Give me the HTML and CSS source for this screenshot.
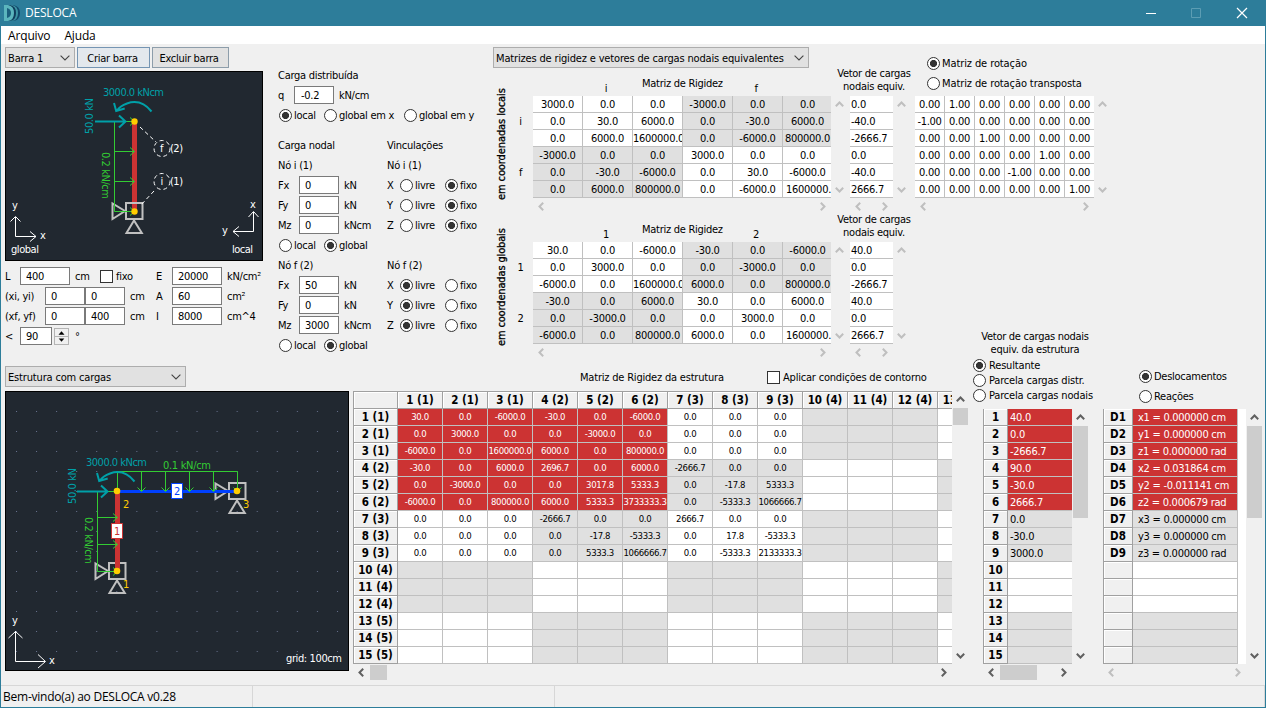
FILE: index.html
```html
<!DOCTYPE html>
<html lang="pt-BR">
<head>
<meta charset="utf-8">
<title>DESLOCA</title>
<link rel="stylesheet" href="styles.css">
</head>
<body>
<svg class="defs" width="0" height="0">
  <symbol id="up" viewBox="0 0 9 6"><path d="M0.8 5.2 4.5 1.5 8.2 5.2" fill="none" stroke="currentColor" stroke-width="2"/></symbol>
  <symbol id="down" viewBox="0 0 9 6"><path d="M0.8 .8 4.5 4.5 8.2 .8" fill="none" stroke="currentColor" stroke-width="2"/></symbol>
  <symbol id="left" viewBox="0 0 6 9"><path d="M5.2 .8 1.5 4.5 5.2 8.2" fill="none" stroke="currentColor" stroke-width="2"/></symbol>
  <symbol id="right" viewBox="0 0 6 9"><path d="M.8 .8 4.5 4.5 .8 8.2" fill="none" stroke="currentColor" stroke-width="2"/></symbol>
  <symbol id="caret" viewBox="0 0 10 6"><path d="M.6 .6 5 5 9.4 .6" fill="none" stroke="#444" stroke-width="1.1"/></symbol>
  <symbol id="support" viewBox="-24 -10 36 34" overflow="visible">
    <g fill="none" stroke="#c0c0c0" stroke-width="2"><path d="M-8-8H8.500V8H-8zM-21.500-7.500V8L-9 0zM0 9.500-7.500 22H7.800z"/></g>
  </symbol>
</svg>
<div class="window">
  <header class="titlebar">
    <svg class="logo" width="17" height="18" viewBox="0 0 17 18">
      <path d="M5 1h4q7 1 7 8t-7 8H5z" fill="#12496b"/>
      <path d="M4 1h4q6 1 6 8t-6 8H4z" fill="#3d93a3"/>
      <path d="M2 1h4q6 1 6 8t-6 8H2z" fill="#0f3d5c"/>
      <path d="M0 1h4q6 1 6 8t-6 8H0z" fill="#5bb5bd"/>
      <path d="M3 4q4 1 4 5t-4 5z" fill="#1a5f7d"/>
    </svg>
    <span class="caption">DESLOCA</span>
    <svg class="winbtns" width="110" height="12" viewBox="0 0 110 12">
      <path d="M3 6.500h10" stroke="#fff"/><path d="M48.500 1.500h9v9h-9z" fill="none" stroke="#5c9db3"/>
      <path d="M94 1l10 10M104 1l-10 10" stroke="#fff" stroke-width="1.200"/>
    </svg>
  </header>
  <nav class="menubar"><span>Arquivo</span><span>Ajuda</span></nav>
  <main>
    <section class="top">
      <div class="col-bar">
        <div class="toolbar">
          <div class="select s70"><span>Barra 1</span><svg width="10" height="6"><use href="#caret"/></svg></div>
          <button class="btn hot">Criar barra</button>
          <button class="btn b77">Excluir barra</button>
        </div>
        <svg class="canvas" width="258" height="190" viewBox="5 71 258 190">
          <rect x="5.500" y="71.500" width="257" height="189" fill="#212830" stroke="#000"/>
          <path d="M132 121h5v90h-5z" fill="#cc3333"/>
          <use href="#support" x="110" y="201" width="36" height="34"/>
          <g class="green"><path d="M114.500 121V211.500H134M125 121.500h9M114.500 151.500H134M114.500 181.500H134"/>
            <path d="M130 117.500l4.500 4-4.500 4M130 147.500l4.500 4-4.500 4M130 177.500l4.500 4-4.500 4M130 207.500l4.500 4-4.500 4"/></g>
          <g class="cyan"><path d="M95 121.500h30M119 115.500l6.500 6-6.500 6M151.500 111.500Q141 98.500 127 103.500 120 106 117 110.500M114 103l2.200 8 8.500-2.500"/></g>
          <circle cx="134.500" cy="121.500" r="3.200" fill="#ffcc00"/><circle cx="134.500" cy="211.500" r="3.200" fill="#ffcc00"/>
          <g class="dash"><path d="M140 127l16 15M154 191l-14 15"/><circle cx="162" cy="148.500" r="8"/><circle cx="162" cy="181.500" r="8"/></g>
          <g class="axis"><path d="M15.500 217v19.500H36M10.500 221.500l5-5 5 5M30 231.500l6 5-6 5M253.500 212v19.500H233M248.500 217l5-5.500 5 5.500M239 226.500l-6 5 6 5"/></g>
          <g class="ct" fill="#00a0a8"><text x="103" y="96" textLength="61">3000.0 kNcm</text><text transform="translate(93 134) rotate(-90)" textLength="36">50.0 kN</text></g>
          <text class="ct" fill="#33cc33" transform="translate(102 152) rotate(90)" textLength="47">0.2 kN/cm</text>
          <g class="ct" fill="#fff"><text x="160" y="152">f</text><text x="170" y="152" textLength="13">(2)</text><text x="160.500" y="185">i</text><text x="170" y="185" textLength="13">(1)</text>
            <text x="12" y="209">y</text><text x="40" y="239">x</text><text x="11" y="253" textLength="28">global</text><text x="250" y="208">x</text><text x="222" y="234">y</text><text x="232" y="253" textLength="21">local</text></g>
        </svg>
        <div class="props">
          <div class="row"><span class="w15">L</span><input class="w50" value="400"><span class="w30 ml5">cm</span><span class="check"></span><span class="w40 ml3">fixo</span><span class="w16">E</span><input class="w50" value="20000"><span class="ml5">kN/cm²</span></div>
          <div class="row"><span class="w40">(xi, yi)</span><input class="w40" value="0"><input class="w40" value="0"><span class="w26 ml5">cm</span><span class="w16">A</span><input class="w50" value="60"><span class="ml5">cm²</span></div>
          <div class="row"><span class="w40">(xf, yf)</span><input class="w40" value="0"><input class="w40" value="400"><span class="w26 ml5">cm</span><span class="w16">I</span><input class="w50" value="8000"><span class="ml5">cm^4</span></div>
          <div class="row"><span class="w15">&lt;</span><input class="w32" value="90"><span class="spin"><svg width="13" height="7" viewBox="0 0 13 7"><path d="M3.500 5.500h6L6.500 2z"/></svg><svg width="13" height="7" viewBox="0 0 13 7"><path d="M3.500 1.500h6L6.500 5z"/></svg></span><span class="ml6">°</span></div>
        </div>
      </div>

      <div class="col-loads">
        <div class="row">Carga distribuída</div>
        <div class="row"><span class="w16">q</span><input class="w40 pad" value="-0.2"><span class="ml5">kN/cm</span></div>
        <div class="row"><span class="radio on"></span><span class="w30">local</span><span class="radio"></span><span class="w65">global em x</span><span class="radio"></span><span>global em y</span></div>
        <div class="row gap10"><span class="w109">Carga nodal</span><span>Vinculações</span></div>
        <div class="row"><span class="w109">Nó i (1)</span><span>Nó i (1)</span></div>
        <div class="row"><span class="w21">Fx</span><input class="w40" value="0"><span class="w43 ml5">kN</span><span class="w13">X</span><span class="radio"></span><span class="w30">livre</span><span class="radio on"></span><span>fixo</span></div>
        <div class="row"><span class="w21">Fy</span><input class="w40" value="0"><span class="w43 ml5">kN</span><span class="w13">Y</span><span class="radio"></span><span class="w30">livre</span><span class="radio on"></span><span>fixo</span></div>
        <div class="row"><span class="w21">Mz</span><input class="w40" value="0"><span class="w43 ml5">kNcm</span><span class="w13">Z</span><span class="radio"></span><span class="w30">livre</span><span class="radio on"></span><span>fixo</span></div>
        <div class="row"><span class="radio"></span><span class="w30">local</span><span class="radio on"></span><span>global</span></div>
        <div class="row"><span class="w109">Nó f (2)</span><span>Nó f (2)</span></div>
        <div class="row"><span class="w21">Fx</span><input class="w40" value="50"><span class="w43 ml5">kN</span><span class="w13">X</span><span class="radio on"></span><span class="w30">livre</span><span class="radio"></span><span>fixo</span></div>
        <div class="row"><span class="w21">Fy</span><input class="w40" value="0"><span class="w43 ml5">kN</span><span class="w13">Y</span><span class="radio on"></span><span class="w30">livre</span><span class="radio"></span><span>fixo</span></div>
        <div class="row"><span class="w21">Mz</span><input class="w40" value="3000"><span class="w43 ml5">kNcm</span><span class="w13">Z</span><span class="radio on"></span><span class="w30">livre</span><span class="radio"></span><span>fixo</span></div>
        <div class="row"><span class="radio"></span><span class="w30">local</span><span class="radio on"></span><span>global</span></div>
      </div>

      <div class="col-matrices">
        <div class="select s316"><span>Matrizes de rigidez e vetores de cargas nodais equivalentes</span><svg width="10" height="6"><use href="#caret"/></svg></div>
        <div class="block">
          <div class="side">em coordenadas locais</div>
          <div class="rowlabels"><span>i</span><span>f</span></div>
          <div class="mat"><div class="mhead"><span class="q">i</span><span class="t">Matriz de Rigidez</span><span class="q">f</span></div><div class="pane" id="kLocal"></div></div>
          <div class="vec"><div class="vhead">Vetor de cargas<br>nodais equiv.</div><div class="pane" id="fLocal"></div></div>
        </div>
        <div class="block">
          <div class="side globals">em coordenadas globais</div>
          <div class="rowlabels"><span>1</span><span>2</span></div>
          <div class="mat"><div class="mhead"><span class="q">1</span><span class="t">Matriz de Rigidez</span><span class="q">2</span></div><div class="pane" id="kGlobal"></div></div>
          <div class="vec"><div class="vhead">Vetor de cargas<br>nodais equiv.</div><div class="pane" id="fGlobal"></div></div>
        </div>
      </div>

      <div class="col-rot">
        <div class="rothead">
          <div class="row"><span class="radio on"></span><span>Matriz de rotação</span></div>
          <div class="row"><span class="radio"></span><span>Matriz de rotação transposta</span></div>
        </div>
        <div class="pane" id="rot"></div>
      </div>
    </section>

    <section class="bottom">
      <div class="col-struct">
        <div class="select s181"><span>Estrutura com cargas</span><svg width="10" height="6"><use href="#caret"/></svg></div>
        <svg class="canvas" width="344" height="280" viewBox="5 391 344 280">
          <defs><pattern id="dots" x="16" y="411" width="20.060" height="20" patternUnits="userSpaceOnUse"><rect width="1" height="1" fill="#68728f"/></pattern></defs>
          <rect x="5.500" y="391.500" width="343" height="279" fill="#212830" stroke="#000"/>
          <rect x="16" y="411" width="325" height="245" fill="url(#dots)"/>
          <use href="#support" x="93" y="561" width="36" height="34"/><use href="#support" x="213" y="481" width="36" height="34"/>
          <path d="M115 491h5v80h-5z" fill="#cc3333"/><path d="M117 490h120v3H117z" fill="#0040ff"/>
          <g class="green"><path d="M97.500 491V571.500H117M108 491.500h9M97.500 517.500H117M97.500 544.500H117M117.500 491V471.500H237.500V491M141.500 471v20M165.500 471v20M189.500 471v20M213.500 471v20"/>
            <path d="M113 513.500l4.500 4-4.500 4M113 540.500l4.500 4-4.500 4M113 567.500l4.500 4-4.500 4M137.500 487.500l4 4 4-4M161.500 487.500l4 4 4-4M185.500 487.500l4 4 4-4M209.500 487.500l4 4 4-4M233.500 487.500l4 4 4-4"/></g>
          <g class="cyan"><path d="M77 491.500h30M101 485.500l6.500 6-6.500 6M134.500 481.500Q124 468.500 110 473.500 103 476 100 480.500M97 473l2.200 8 8.500-2.500"/></g>
          <g fill="#ffcc00"><circle cx="117" cy="491" r="3.300"/><circle cx="237" cy="491" r="3.300"/><circle cx="117" cy="571" r="3.300"/></g>
          <path d="M171.500 483.500h11v15h-11z" fill="#fff" stroke="#0040ff"/><path d="M111.500 523.500h11v15h-11z" fill="#fff" stroke="#cc3333"/>
          <g class="axis"><path d="M15.500 631v30.500H45M8.500 638l7-6.500 7 6.500M38 654.500l7.500 7-7.500 6.500"/></g>
          <g class="ct" fill="#00a0a8"><text x="86" y="466" textLength="61">3000.0 kNcm</text><text transform="translate(76 504) rotate(-90)" textLength="36">50.0 kN</text></g>
          <g class="ct" fill="#33cc33"><text x="163" y="469" textLength="48">0.1 kN/cm</text><text transform="translate(85 517) rotate(90)" textLength="47">0.2 kN/cm</text></g>
          <g class="ct" fill="#ffcc00"><text x="123" y="508">2</text><text x="243" y="508">3</text><text x="123" y="588">1</text></g>
          <text class="ct" x="174" y="495" fill="#0040ff">2</text><text class="ct" x="114" y="535" fill="#cc3333">1</text>
          <g class="ct" fill="#fff"><text x="12" y="624">y</text><text x="49" y="664">x</text><text x="286" y="662" textLength="56">grid: 100cm</text></g>
        </svg>
      </div>
      <div class="col-k">
        <div class="khead"><span class="ktitle">Matriz de Rigidez da estrutura</span><span class="check"></span><span class="ml3">Aplicar condições de contorno</span></div>
        <div class="pane" id="kStruct"></div>
      </div>
      <div class="col-f">
        <div class="fhead">Vetor de cargas nodais<br>equiv. da estrutura</div>
        <div class="opts"><div class="opt"><span class="radio on"></span>Resultante</div><div class="opt"><span class="radio"></span>Parcela cargas distr.</div><div class="opt"><span class="radio"></span>Parcela cargas nodais</div></div>
        <div class="pane" id="fStruct"></div>
      </div>
      <div class="col-d">
        <div class="opts2"><div class="row"><span class="radio on"></span>Deslocamentos</div><div class="row"><span class="radio"></span>Reações</div></div>
        <div class="pane" id="disp"></div>
      </div>
    </section>
  </main>
  <footer class="status"><span class="msg">Bem-vindo(a) ao DESLOCA v0.28</span><span class="mid"></span><span class="rest"></span></footer>
</div>
<script src="app.js"></script>
</body>
</html>
```
FILE: styles.css
```css
* { box-sizing: border-box; }
body { margin: 0; width: 1266px; height: 708px; overflow: hidden; background: #f0f0f0; color: #000;
  font: 11px/13px "DejaVu Sans Condensed", "DejaVu Sans", sans-serif; font-stretch: condensed; letter-spacing: -0.27px; }
.defs { display: block; height: 0; }
.window { width: 1266px; height: 708px; display: flex; flex-direction: column; border: 1px solid #2d7d9a; border-top: 0; }
.titlebar { height: 26px; flex: none; background: #2d7d9a; display: flex; align-items: center; padding-left: 3px; color: #fff; }
.caption { font: 12px/16px "Open Sans", "Noto Sans", sans-serif; letter-spacing: -0.2px; margin-left: 4px; flex: 1; }
.winbtns { margin-right: 12px; }
.menubar { height: 18px; flex: none; background: #fff; display: flex; gap: 14px; padding: 1px 0 0 7px; font: 12px/18px "Open Sans", "Noto Sans", sans-serif; letter-spacing: -0.15px; }
main { flex: 1; display: flex; flex-direction: column; }
.top { height: 318px; display: flex; padding-left: 4px; flex: none; }
.bottom { display: flex; flex: 1; padding-left: 4px; }
.col-bar { width: 273px; padding-top: 3px; }
.toolbar { display: flex; gap: 2px; height: 21px; margin-bottom: 3px; }
.canvas { display: block; }
.select { height: 21px; border: 1px solid #adadad; background: #e1e1e1; display: flex; align-items: center; justify-content: space-between; padding: 1px 4px 0 2px; white-space: nowrap; letter-spacing: -0.16px; }
.s70 { width: 70px; } .s316 { width: 316px; } .s181 { width: 181px; }
.btn { font: inherit; letter-spacing: inherit; color: #000; height: 21px; width: 73px; padding: 1px 0 0; border: 1px solid #8d9daa; background: #e1e1e1; white-space: nowrap; }
.btn.b77 { width: 77px; padding-right: 3px; }
.btn.hot { background: #e3e8ed; border-color: #7595b3; padding-right: 2px; }
.props { padding-top: 5px; }
.row { height: 20px; display: flex; align-items: center; white-space: nowrap; }
.row > * { flex: none; }
input { font: inherit; letter-spacing: inherit; color: #000; height: 18px; border: 1px solid #7a7a7a; background: #fff; padding: 0 0 0 5px; margin: 0; border-radius: 0; }
input.pad { padding-left: 6px; }
.w13 { width: 13px; } .w15 { width: 15px; } .w16 { width: 16px; } .w21 { width: 21px; } .w26 { width: 26px; }
.w30 { width: 30px; } .w32 { width: 32px; } .w40 { width: 40px; } .w43 { width: 43px; } .w50 { width: 50px; }
.w65 { width: 65px; } .w109 { width: 109px; }
.ml3 { margin-left: 3px; } .ml5 { margin-left: 5px; } .ml6 { margin-left: 6px; }
.row > .w30.ml5 { width: 25px; }
.check { width: 13px; height: 13px; border: 1px solid #333; background: #fff; flex: none; }
.spin { width: 15px; height: 17px; margin-left: 2px; display: flex; flex-direction: column; border: 1px solid #b4b4b4; }
.spin svg { display: block; height: 7.500px; } .spin svg + svg { border-top: 1px solid #b4b4b4; }
.radio { width: 13px; height: 13px; border: 1px solid #333; border-radius: 50%; background: #fff; margin: 0 2px 0 1px; flex: none; }
.radio.on { background: radial-gradient(circle, #333 0 3.200px, #fff 3.900px); }
.w13 + .radio { margin-left: 0; }
.w30 + .radio { margin-left: 0; } .w65 + .radio { margin-left: 0; }
.col-loads { width: 215px; padding-top: 21px; }
.gap10 { margin-top: 10px; }
.col-matrices { width: 422px; padding-top: 3px; }
.block { height: 146px; display: flex; }
.side { writing-mode: vertical-rl; transform: rotate(180deg); width: 18px; line-height: 18px; text-align: center; padding-bottom: 7px; white-space: nowrap; letter-spacing: -0.1px; -webkit-text-stroke: 0.3px #000; }
.side.globals { padding-bottom: 1px; letter-spacing: -0.15px; }
.rowlabels { width: 22px; padding-top: 28px; display: grid; grid-template-rows: 51px 51px; }
.rowlabels span { display: flex; align-items: center; justify-content: center; padding-right: 3px; }
.mat { width: 317px; }
.mhead { height: 28px; width: 298px; display: flex; }
.mhead .q { width: 66px; text-align: center; padding-top: 14px; }
.mhead .q:first-child { width: 109px; padding-left: 37px; }
.mhead .t { width: 81px; padding-top: 9px; white-space: nowrap; }
.vhead { height: 28px; width: 50px; display: flex; justify-content: center; text-align: center; white-space: nowrap; line-height: 13px; margin: -1px 0 1px -1px; }
.rothead { height: 52px; padding: 9px 0 0 11px; letter-spacing: -0.1px; }
.pane { display: grid; }
.view { overflow: hidden; background: #fff; }
.view .line { display: flex; height: 17px; }
.c { flex: none; border-right: 1px solid #c0c0c0; border-bottom: 1px solid #c0c0c0; display: flex; align-items: center; justify-content: safe center; overflow: hidden; white-space: nowrap; }
.c.l { justify-content: flex-start; padding: 1px 0 0 1px; }
.c.g { background: #e0e0e0; }
.c.r { background: #cc3333; color: #fff; }
.c.h { background: #f0f0f0; font-weight: bold; font-size: 11.5px; letter-spacing: 0; border-color: #a0a0a0; box-shadow: inset 1px 1px #fff; padding-top: 1px; }
.c.wide { justify-content: flex-start; padding-left: 3px; }
#kStruct .view { border: solid #a0a0a0; border-width: 1px 0 0 1px; }
#kStruct .c:not(.h) { font-size: 9.500px; letter-spacing: -0.35px; padding-bottom: 1px; }
#fStruct .view, #disp .view { border-left: 1px solid #a0a0a0; }
#fStruct .c.l { padding-left: 2px; }
#disp .c.l { padding-left: 5px; }
.vbar { display: flex; flex-direction: column; width: 16px; color: #606060; }
.hbar { display: flex; height: 16px; color: #606060; }
.vbar .a { width: 16px; height: 16px; } .hbar .a { width: 16px; height: 16px; }
.a { display: flex; align-items: center; justify-content: center; flex: none; }
.off { color: #bfbfbf; }
.space { flex: 1; }
.thumb { background: #cdcdcd; flex: none; }
.vbar .thumb { width: 15px; margin: 1px 0 0 1px; } .hbar .thumb { height: 15px; margin: 1px 0 0 1px; }
.col-struct { width: 348px; padding-top: 4px; }
.col-struct .select { margin-bottom: 4px; }
.col-k { width: 620px; }
.khead { height: 29px; display: flex; align-items: center; padding: 2px 0 0 227px; white-space: nowrap; letter-spacing: -0.2px; }
.ktitle { width: 187px; }
.col-f { width: 130px; margin-top: -33px; }
.fhead { width: 126px; text-align: center; white-space: nowrap; height: 29px; line-height: 13px; padding: 1px 2px 0 0; }
.opts { height: 51px; }
.opt { display: flex; align-items: center; height: 15px; white-space: nowrap; letter-spacing: -0.17px; }
.opt .radio { margin-left: 0; margin-right: 3px; }
#fStruct { padding-left: 10px; }
.col-d { width: 160px; }
.opts2 { height: 47px; padding: 4px 0 0 35px; }
.status { height: 22px; border-top: 1px solid #d7d7d7; display: flex; align-items: stretch; flex: none; font: 12px/21px "Open Sans", "Noto Sans", sans-serif; letter-spacing: -0.24px; }
.status span { border-right: 1px solid #d7d7d7; }
.msg { width: 252px; padding-left: 2px; } .mid { width: 302px; } .rest { flex: 1; }
.ct { font: 11px "DejaVu Sans Condensed", "DejaVu Sans", sans-serif; letter-spacing: 0; }
.green { fill: none; stroke: #33cc33; stroke-width: 1; }
.cyan { fill: none; stroke: #00a0a8; stroke-width: 2; }
.axis { fill: none; stroke: #fff; stroke-width: 1; }
.dash { fill: none; stroke: #fff; stroke-width: 1; stroke-dasharray: 4 3; }
```
FILE: app.js
```js
const icon = (n) => {
  const v = n === 'up' || n === 'down';
  return `<span class="a"><svg width="${v ? 9 : 6}" height="${v ? 6 : 9}"><use href="#${n}"/></svg></span>`;
};
const thumb = (s, dim) => s ? `<span class="thumb" style="${dim}:${s}px"></span>` : '';

function pane(id, w, h, lines, vThumb, hThumb, vOff, hOff) {
  const el = document.getElementById(id);
  el.style.gridTemplateColumns = `${w}px 16px`;
  el.style.gridTemplateRows = `${h}px 16px`;
  el.innerHTML = `<div class="view">${lines.map(l => `<div class="line">${l}</div>`).join('')}</div>
    <div class="vbar ${vOff ? 'off' : ''}">${icon('up')}${thumb(vThumb, 'height')}<span class="space"></span>${icon('down')}</div>
    <div class="hbar ${hOff ? 'off' : ''}">${icon('left')}${thumb(hThumb, 'width')}<span class="space"></span>${icon('right')}</div>`;
}
const cell = (t, w, cls = '') => `<span class="c ${cls}" style="width:${w}px">${t}</span>`;
const parse = (s) => s.trim().split('\n').map(r => r.trim().split(/\s+/));

const quad = (s) => parse(s).map((r, i) => r.map((t, j) =>
  cell(t, 50, ((i < 3) !== (j < 3) ? 'g' : '') + (j === 5 && t.length > 8 ? ' wide' : ''))).join(''));
pane('kLocal', 298, 102, quad(`
3000.0 0.0 0.0 -3000.0 0.0 0.0
0.0 30.0 6000.0 0.0 -30.0 6000.0
0.0 6000.0 1600000.0 0.0 -6000.0 800000.0
-3000.0 0.0 0.0 3000.0 0.0 0.0
0.0 -30.0 -6000.0 0.0 30.0 -6000.0
0.0 6000.0 800000.0 0.0 -6000.0 1600000.0`), 0, 0, true, true);
pane('kGlobal', 298, 102, quad(`
30.0 0.0 -6000.0 -30.0 0.0 -6000.0
0.0 3000.0 0.0 0.0 -3000.0 0.0
-6000.0 0.0 1600000.0 6000.0 0.0 800000.0
-30.0 0.0 6000.0 30.0 0.0 6000.0
0.0 -3000.0 0.0 0.0 3000.0 0.0
-6000.0 0.0 800000.0 6000.0 0.0 1600000.0`), 0, 0, true, true);
const vec = (s) => s.split(' ').map(t => cell(t, 50, 'l'));
pane('fLocal', 43, 102, vec('0.0 -40.0 -2666.7 0.0 -40.0 2666.7'), 0, 0, true, true);
pane('fGlobal', 43, 102, vec('40.0 0.0 -2666.7 40.0 0.0 2666.7'), 0, 0, true, true);
pane('rot', 179, 102, parse(`
0.00 1.00 0.00 0.00 0.00 0.00
-1.00 0.00 0.00 0.00 0.00 0.00
0.00 0.00 1.00 0.00 0.00 0.00
0.00 0.00 0.00 0.00 1.00 0.00
0.00 0.00 0.00 -1.00 0.00 0.00
0.00 0.00 0.00 0.00 0.00 1.00`).map(r => r.map(t => cell(t, 30)).join('')), 0, 0, true, true);

const K = parse(`
30.0 0.0 -6000.0 -30.0 0.0 -6000.0 0.0 0.0 0.0
0.0 3000.0 0.0 0.0 -3000.0 0.0 0.0 0.0 0.0
-6000.0 0.0 1600000.0 6000.0 0.0 800000.0 0.0 0.0 0.0
-30.0 0.0 6000.0 2696.7 0.0 6000.0 -2666.7 0.0 0.0
0.0 -3000.0 0.0 0.0 3017.8 5333.3 0.0 -17.8 5333.3
-6000.0 0.0 800000.0 6000.0 5333.3 3733333.3 0.0 -5333.3 1066666.7
0.0 0.0 0.0 -2666.7 0.0 0.0 2666.7 0.0 0.0
0.0 0.0 0.0 0.0 -17.8 -5333.3 0.0 17.8 -5333.3
0.0 0.0 0.0 0.0 5333.3 1066666.7 0.0 -5333.3 2133333.3`);
const name = (i) => `${i + 1} (${Math.floor(i / 3) + 1})`;
const grid = [cell('', 44, 'h') + [...Array(13).keys()].map(j => cell(name(j), 45, 'h')).join('')];
for (let i = 0; i < 15; i++) {
  let s = cell(name(i), 44, 'h');
  for (let j = 0; j < 13; j++) {
    const alt = (Math.floor(i / 3) + Math.floor(j / 3)) % 2;
    s += cell(K[i] && K[i][j] || '', 45, i < 6 && j < 6 ? 'r' : alt ? 'g' : '');
  }
  grid.push(s);
}
pane('kStruct', 599, 273, grid, 17, 17);

const F = '40.0 0.0 -2666.7 90.0 -30.0 2666.7 0.0 -30.0 3000.0'.split(' ');
const D = ['x1 = 0.000000 cm', 'y1 = 0.000000 cm', 'z1 = 0.000000 rad', 'x2 = 0.031864 cm', 'y2 = -0.011141 cm',
  'z2 = 0.000679 rad', 'x3 = 0.000000 cm', 'y3 = 0.000000 cm', 'z3 = 0.000000 rad'];
const shade = (i) => i < 6 ? 'l r' : Math.floor(i / 3) % 2 ? 'l' : 'l g';
const idx = [...Array(15).keys()];
pane('fStruct', 89, 255, idx.map(i => cell(i + 1, 24, 'h') + cell(F[i] || '', 70, shade(i))), 92, 37);
pane('disp', 143, 255, idx.map(i => cell(D[i] ? 'D' + (i + 1) : '', 29, 'h') + cell(D[i] || '', 105, shade(i))), 92, 0, false, true);
```
